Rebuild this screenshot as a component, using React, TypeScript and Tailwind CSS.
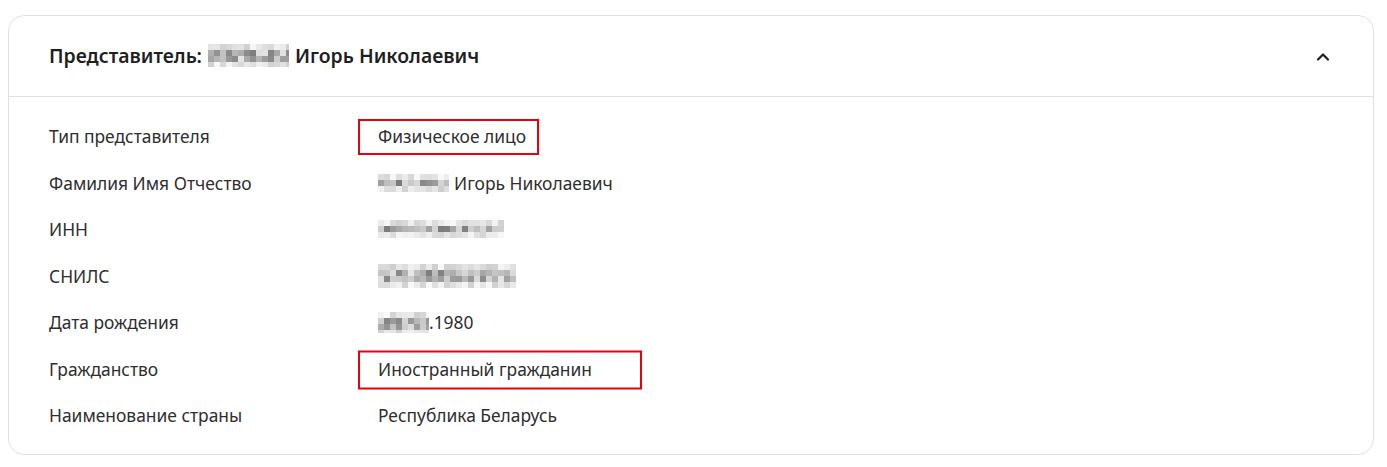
import React from "react";

type Row = {
  label: string;
  value: React.ReactNode;
  marked?: boolean;
  boxWidth?: number;
  boxHeight?: number;
};

function Pixelated({ width, height, seed }: { width: number; height: number; seed: number }) {
  const cell = 6;
  const cols = Math.ceil(width / cell);
  const rows = Math.ceil(height / cell);
  const cells: React.ReactNode[] = [];
  let s = seed;
  for (let r = 0; r < rows; r++) {
    for (let c = 0; c < cols; c++) {
      s = (s * 9301 + 49297) % 233280;
      const t = s / 233280;
      const edge = r === 0 || r === rows - 1;
      const g = Math.round(edge ? 205 + t * 45 : 120 + t * 110);
      cells.push(
        <rect key={`${r}-${c}`} x={c * cell} y={r * cell} width={cell} height={cell} fill={`rgb(${g},${g},${g})`} />
      );
    }
  }
  return (
    <svg width={width} height={height} className="inline-block shrink-0 align-middle" aria-hidden>
      {cells}
    </svg>
  );
}

const rows: Row[] = [
  { label: "Тип представителя", value: "Физическое лицо", marked: true, boxWidth: 181, boxHeight: 36 },
  {
    label: "Фамилия Имя Отчество",
    value: (
      <span className="flex items-center gap-[5px]">
        <Pixelated width={71} height={18} seed={3} /> Игорь Николаевич
      </span>
    ),
  },
  { label: "ИНН", value: <Pixelated width={126} height={18} seed={11} /> },
  { label: "СНИЛС", value: <Pixelated width={138} height={24} seed={27} /> },
  {
    label: "Дата рождения",
    value: (
      <span className="flex items-center">
        <Pixelated width={51} height={21} seed={41} />
        .1980
      </span>
    ),
  },
  { label: "Гражданство", value: "Иностранный гражданин", marked: true, boxWidth: 284, boxHeight: 39 },
  { label: "Наименование страны", value: "Республика Беларусь" },
];

export default function App() {
  return (
    <div className="min-h-[467px] bg-white pt-[15px] pl-[8px] pr-[13px] font-['Noto_Sans',sans-serif] text-[17.4px] text-[#2e2e2e]">
      <div className="rounded-[16px] border border-[#dde1e6] bg-white">
        <div className="flex h-[81px] items-center justify-between border-b border-[#dde1e6] pl-[40px] pr-[43px]">
          <h2 className="flex items-center gap-[6px] text-[19.4px] font-semibold text-[#1f1f1f]">
            Представитель:
            <Pixelated width={81} height={23} seed={7} />
            Игорь Николаевич
          </h2>
          <svg width="14" height="9" viewBox="0 0 14 9" fill="none" aria-hidden>
            <path d="M2 7.5 7 2.5 12 7.5" stroke="#1f1f1f" strokeWidth="2.2" strokeLinecap="round" strokeLinejoin="round" />
          </svg>
        </div>
        <div className="flex flex-col pt-[16px] pb-[15px] pl-[40px]">
          {rows.map((r) => (
            <div key={r.label} className="flex h-[46.5px] items-center">
              <div className="w-[329px] shrink-0">{r.label}</div>
              <div className="relative flex items-center">
                {r.marked && (
                  <span
                    className="pointer-events-none absolute top-1/2 -left-[20px] -translate-y-1/2 border-2 border-[#e8000b]"
                    style={{ width: r.boxWidth, height: r.boxHeight, marginTop: 1 }}
                  />
                )}
                {r.value}
              </div>
            </div>
          ))}
        </div>
      </div>
    </div>
  );
}
